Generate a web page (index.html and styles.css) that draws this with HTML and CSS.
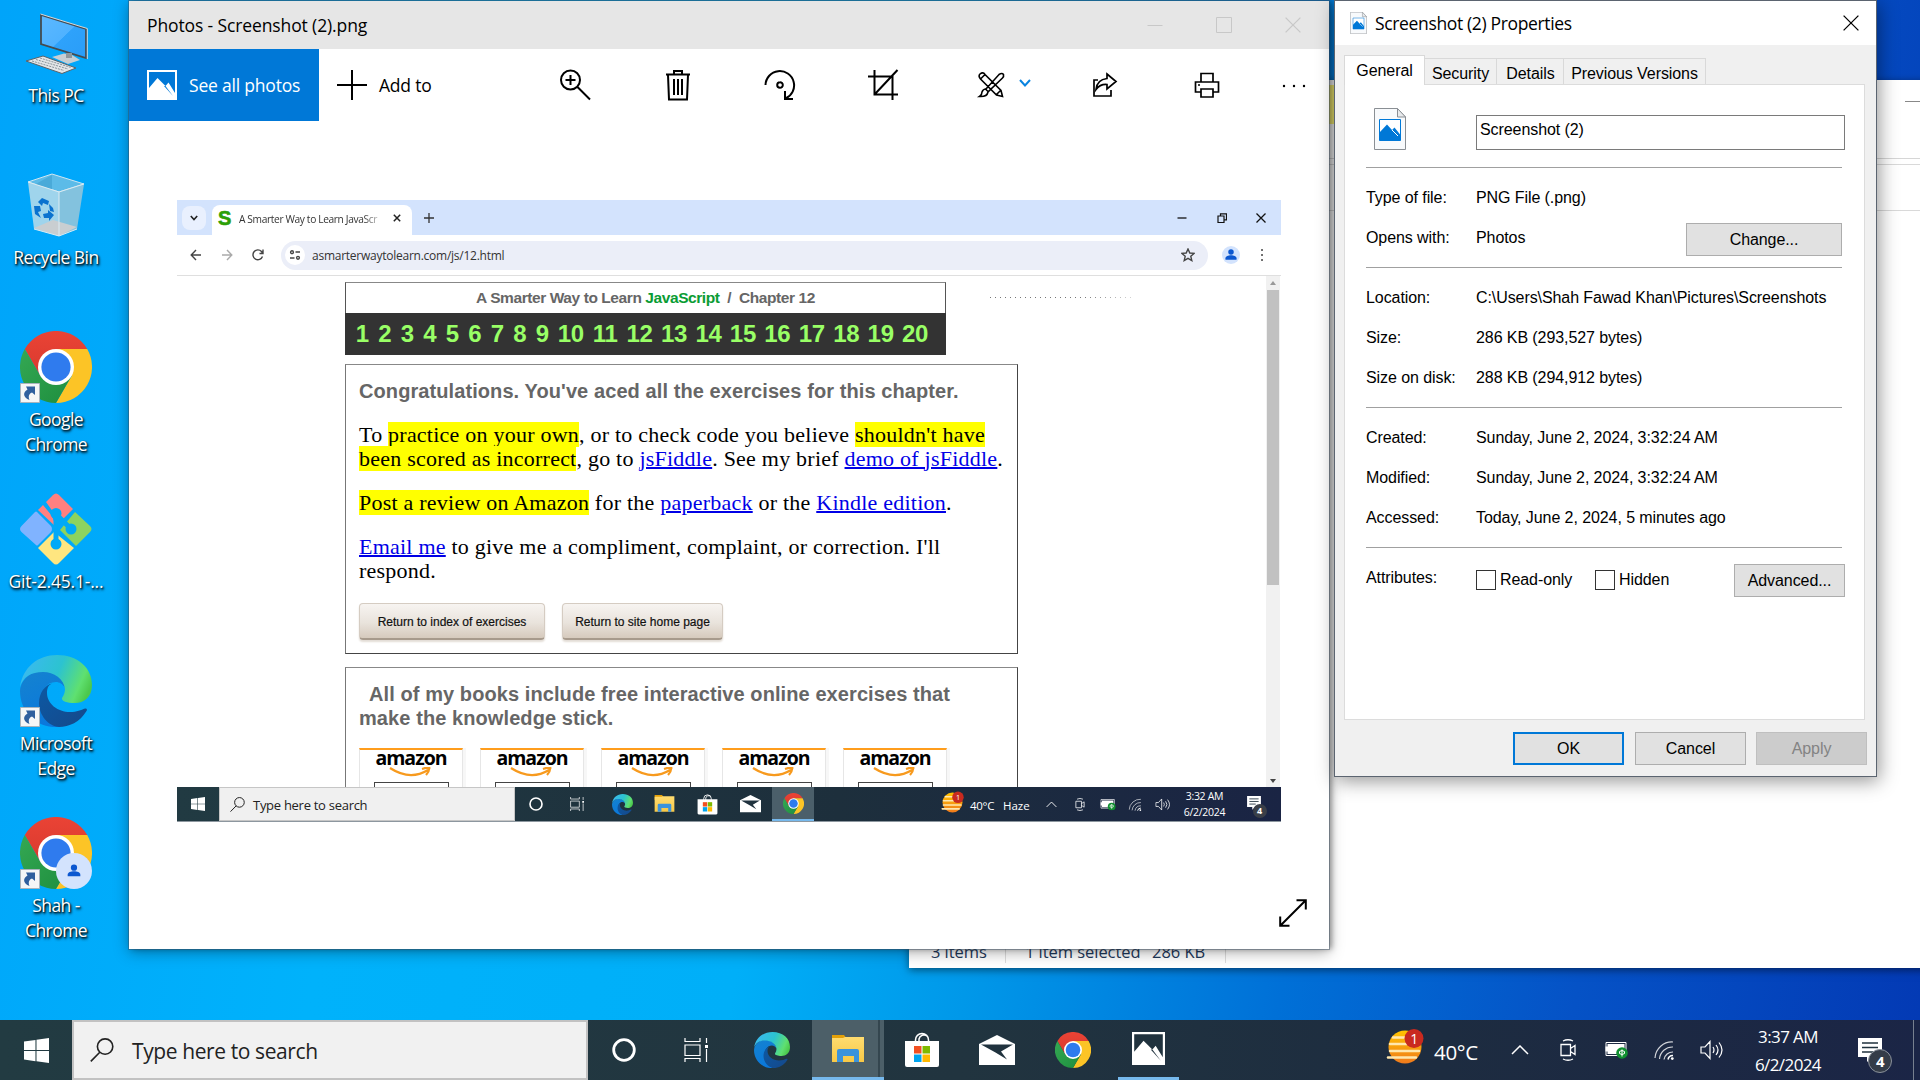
FILE: index.html
```html
<!DOCTYPE html>
<html lang="en">
<head>
<meta charset="utf-8">
<title>Desktop</title>
<link rel="stylesheet" href="styles.css">
</head>
<body>
<svg class="defs" width="0" height="0" aria-hidden="true">
  <defs>
    <linearGradient id="g-swoosh" x1="0" y1=".3" x2="1" y2=".6"><stop offset="0" stop-color="#3bb9f0"/><stop offset=".5" stop-color="#2cc3d0"/><stop offset=".85" stop-color="#5fe070"/><stop offset="1" stop-color="#4cc84c"/></linearGradient>
    <linearGradient id="g-wave" x1="0" y1="0" x2=".4" y2="1"><stop offset="0" stop-color="#1583cf"/><stop offset="1" stop-color="#0a78dc"/></linearGradient>
    <linearGradient id="g-deep" x1="0" y1="0" x2="1" y2="1"><stop offset="0" stop-color="#0c59a4"/><stop offset="1" stop-color="#15488a"/></linearGradient>
    <linearGradient id="g-screen" x1="0" y1="0" x2="1" y2="1"><stop offset="0" stop-color="#5cb8ff"/><stop offset=".5" stop-color="#4fb2ff"/><stop offset=".51" stop-color="#2ea2fb"/><stop offset="1" stop-color="#2a9df8"/></linearGradient>
    <linearGradient id="g-sun" x1="0" y1="0" x2="0" y2="1"><stop offset="0" stop-color="#ffc400"/><stop offset="1" stop-color="#f07a1c"/></linearGradient>
    <linearGradient id="g-folder" x1="0" y1="0" x2="0" y2="1"><stop offset="0" stop-color="#ffdc70"/><stop offset="1" stop-color="#f8c846"/></linearGradient>
    <linearGradient id="g-red" x1="0" y1="0" x2="0" y2="1"><stop offset="0" stop-color="#ea4335"/><stop offset="1" stop-color="#d93a2f"/></linearGradient>
    <linearGradient id="g-green" x1="0" y1="0" x2="1" y2="1"><stop offset="0" stop-color="#34a853"/><stop offset="1" stop-color="#1e8e3e"/></linearGradient>
  </defs>
  <symbol id="chrome" viewBox="0 0 72 72">
    <path fill="url(#g-red)" d="M4.8 18A36 36 0 0 1 67.2 18H36V36L20.4 45Z"/>
    <path fill="#fcc426" d="M67.2 18A36 36 0 0 1 36 72L51.6 45 36 36V18Z"/>
    <path fill="url(#g-green)" d="M36 72A36 36 0 0 1 4.8 18L20.4 45 36 36 51.6 45Z"/>
    <circle cx="36" cy="36" r="18" fill="#fff"/><circle cx="36" cy="36" r="14.6" fill="#2f7bee"/>
  </symbol>
  <symbol id="edge" viewBox="0 0 72 72">
    <path fill="url(#g-wave)" d="M0 36C1 24 11 16 23 16C34 16 44 23 45 33C43 29 39 27 36 27C26 27 21 36 21 48C21 58 30 70 40 72C18 74 0 58 0 36Z"/>
    <path fill="url(#g-swoosh)" d="M0 32C3 12 18 0 37 0C58 0 72 13 72 30C72 42 64 48 55 48C47 48 41 46 42 43C44 40 45 37 45 34C44 24 34 17 23 17C11 17 3 22 0 32Z"/>
    <path fill="url(#g-deep)" d="M32 28.500C28 30 27 34 27 38C27 49 38 57 50 57C57 57 61 55 65 53.500C67 53 67.500 55 66.500 56C60 67 49 72 39 72C28 71 19 60 19 48C19 38 25 30 32 28.500Z"/>
  </symbol>
  <symbol id="shortcut" viewBox="0 0 20 20">
    <path fill="#f5f6f7" stroke="#a9b4bc" d="M.5 .5h19v19H.5z"/>
    <path fill="#2f5f9e" d="M6 3.500h9v8.500l-3-2.500c-3 1-4 4-2.500 7.500C3 14.500 2.500 9.500 7.500 6.500Z"/>
  </symbol>
  <symbol id="windows" viewBox="0 0 24 24"><path fill="#fff" d="M0 3.300 11 1.800V11.500H0ZM12 1.600 24 0V11.500H12ZM0 12.500H11V22.200L0 20.700ZM12 12.500H24V24L12 22.400Z"/></symbol>
  <symbol id="search" viewBox="0 0 24 24"><path fill="none" stroke="currentColor" stroke-width="1.600" d="M22.800 8.600a7.700 7.700 0 1 1-15.400 0a7.700 7.700 0 1 1 15.400 0M9.800 14.200.8 23.400"/></symbol>
  <symbol id="cortana" viewBox="0 0 24 24"><circle cx="12" cy="12" r="10.300" fill="none" stroke="#fff" stroke-width="2.800"/></symbol>
  <symbol id="taskview" viewBox="0 0 24 24"><path fill="none" stroke="#fff" stroke-width="1.200" d="M1 0v3.500h15V0M1 7h15v10.500H1zM1 24v-3.500h15V24M22.500 0v5M22.500 11v13"/><path fill="#fff" d="M21 7h3v3h-3z"/></symbol>
  <symbol id="folder" viewBox="0 0 34 28">
    <path fill="#e3a008" d="M1 0h12l3 4v4H1z"/><path fill="url(#g-folder)" d="M1 3h11l2-1h19v25H1z"/>
    <path fill="#3b93dc" d="M6 27V16q0-2 2-2h18q2 0 2 2v11h-5v-6H12v6z"/>
  </symbol>
  <symbol id="store" viewBox="0 0 36 36">
    <path fill="none" stroke="#fff" stroke-width="1.500" d="M11.500 10V8a6.500 6.500 0 0 1 13 0v2M15 10V7a5 5 0 0 1 8-3"/><path fill="#fff" d="M1 9h34v24q0 2-2 2H3q-2 0-2-2z"/>
    <path fill="#f25022" d="M10 14h7.500v7.500H10z"/><path fill="#7fba00" d="M18.500 14H26v7.500h-7.500z"/><path fill="#00a4ef" d="M10 22.500h7.500V30H10z"/><path fill="#ffb900" d="M18.500 22.500H26V30h-7.500z"/>
  </symbol>
  <symbol id="mail" viewBox="0 0 36 30"><path fill="#fff" d="M0 9 18 0 36 9V30H0Z"/><path fill="#20323e" d="M2 9.500H34L22 16.500 28 24.500 16.500 17.500Z"/></symbol>
  <symbol id="photo" viewBox="0 0 30 30"><path fill="#fff" d="M0 0h30v30H0z"/><path fill="currentColor" d="M2 2h26v21L21.500 12.500 18.500 16 10.500 8 2 18z"/><path fill="currentColor" d="M18.500 16 26 26 17 16z"/></symbol>
  <symbol id="weather" viewBox="0 0 38 38">
    <circle cx="19" cy="19" r="16.500" fill="url(#g-sun)"/>
    <path stroke="#ffe7ae" stroke-width="2.600" stroke-linecap="round" d="M7 9.500h16M4 16h18M4 23h29M2 29.500h28"/>
    <circle cx="28" cy="10.500" r="9.500" fill="#c92a1f"/>
  </symbol>
  <symbol id="caret" viewBox="0 0 18 10"><path fill="none" stroke="currentColor" stroke-width="1.500" d="M1 9 9 1 17 9"/></symbol>
  <symbol id="meet" viewBox="0 0 18 22"><path fill="none" stroke="#fff" stroke-width="1.300" d="M2 5.500h9.500v11H2zM11.500 9.500l4.500-3v9l-4.500-3M4 2q5-2.500 10 0M4 20q5 2.500 10 0"/></symbol>
  <symbol id="battery" viewBox="0 0 24 18"><path fill="#fff" d="M3 3h17v10H3zM1 5.500h2v5H1z"/><path fill="none" stroke="#fff" d="M1.500 1.500h20v13h-20z"/><circle cx="17.500" cy="12" r="5.800" fill="#109030"/><path fill="none" stroke="#fff" d="M17.500 8.500v7M15 10.500q2.500-2 5 0v2q-2.500 2-5 0z"/></symbol>
  <symbol id="wifi" viewBox="0 0 20 20"><path fill="none" stroke="#fff" stroke-width="1.200" opacity=".8" d="M1 18A17 17 0 0 1 19 2M5.500 19A13 13 0 0 1 19 7M10 19.500A9 9 0 0 1 19 12"/><path fill="none" stroke="#fff" stroke-width="1.500" d="M14 19.500A5 5 0 0 1 19 15.500"/><circle cx="18.300" cy="18.600" r="1.400" fill="#fff"/></symbol>
  <symbol id="speaker" viewBox="0 0 24 20"><path fill="none" stroke="#fff" stroke-width="1.200" d="M1 7h4l5-5.500v17L5 13H1zM13 7q2 3 0 6M16 5q4 5 0 10M19 2.500q6 7.500 0 15"/></symbol>
  <symbol id="note" viewBox="0 0 24 26"><path fill="#fff" d="M0 0h24v19H14l-5 5v-5H0z"/><path stroke="#20323e" stroke-width="1.500" d="M4 5h16M4 9.500h16M4 14h11"/></symbol>
  <symbol id="person" viewBox="0 0 24 24"><circle cx="12" cy="7" r="4.700" fill="#0b57d0"/><path fill="#0b57d0" d="M2.500 20v-2.500c0-3.300 5-5 9.500-5s9.500 1.700 9.500 5V20z"/></symbol>
  <symbol id="close" viewBox="0 0 16 16"><path fill="none" stroke="currentColor" stroke-width="1.300" d="M.6.600 15.400 15.400M15.400.600.600 15.400"/></symbol>
  <symbol id="file" viewBox="0 0 32 42"><path fill="#f8fafc" stroke="#8a8f94" d="M.5.500H23.500L31.500 9V41.500H.5z"/><path fill="#e8eaec" stroke="#8a8f94" d="M23.500.500V9h8z"/><path fill="#fff" stroke="#0078d7" d="M5.500 11.500h21v21h-21z"/><path fill="#0078d7" d="M5.500 24.500 13 16.500 18 22 20.500 19.500 26.500 27V32.500h-21z"/><path stroke="#fff" d="m18 22 6 6"/></symbol>
</svg>

<main class="desktop">
  <nav class="shortcuts">
    <div class="shortcut"><svg class="pc" viewBox="0 0 72 72">
      <path fill="url(#g-screen)" stroke="#454b50" stroke-width="1.800" d="M21 8 66 22V51L21 37Z"/><path fill="none" stroke="#d4dadd" d="M20.500 7 67.300 21.500V52"/>
      <path fill="#c7ced3" d="M32 50 44 46.500 52 48 60 53 48 57Z"/><path fill="#8d979d" d="M46 46h6v5h-6z"/>
      <path fill="#e3e6e8" stroke="#59636a" d="M6 54 23 49 56 61 42 66.500Z"/><path stroke="#89939a" stroke-dasharray="2 1" d="M12 54 44 63.500M16 52.500 48 62M20 51 51 60.500"/></svg><span>This PC</span></div>
    <div class="shortcut"><svg viewBox="0 0 72 72">
      <path fill="#5cbbe8" stroke="#cfe6f2" d="M8 13 32 5 64 15 39 23Z"/><path fill="#3e9fcf" d="M32 6v16l-18-6z" opacity=".6"/>
      <path fill="#9fd4ec" d="M8 13 39 23V67L14 60Z"/><path fill="#83c2de" d="M64 15 39 23V67L57 60Z"/>
      <path fill="#c9ced1" d="M14 59 33 51 57 58 39 67Z"/><path fill="none" stroke="#dcebf2" d="M8 13 39 23 64 15M39 23V67M14 60 39 67 57 60"/>
      <g fill="#0a72cf"><path d="m18 33 4-4 7 3-1 4-5-2-1 3z"/><path d="m14 37 6 0 1 5-3 1 3 6-6-4z"/><path d="m23 45 5-1v-3l6 5-5 6v-3l-5 0zM29 35l4 4 1 4-4-1z"/></g></svg><span>Recycle Bin</span></div>
    <div class="shortcut"><svg viewBox="0 0 72 72"><use href="#chrome"/><use href="#shortcut" y="52" width="20" height="20"/></svg><span>Google<br>Chrome</span></div>
    <div class="shortcut"><svg viewBox="0 0 72 72">
      <path fill="#80b3ff" d="M1.500 33 15 19q1-1 2 0L31 33q2 3 0 6L18 52q-1 1-2 0L1.500 39q-3-3 0-6z"/>
      <path fill="#ff8080" d="m26 9 7-7q3-3 6 0l14 14-12 12-3-3-7-9zM18 17l5-5 9 11 4 11z"/>
      <path fill="#8dd35f" d="m55 19 15 14q3 3 0 6L56 53 40 37z"/>
      <path fill="#ffe680" d="m18 55 16-16 20 16-15 15q-3 3-6 0z"/>
      <path fill="none" stroke="#00a9f7" stroke-width="5" d="M36 20v31M36 21l15 15"/><g fill="#00a9f7"><circle cx="36" cy="20.500" r="5.500"/><circle cx="51" cy="36" r="5.500"/><circle cx="36" cy="51" r="5.500"/></g></svg><span class="git">Git-2.45.1-...</span></div>
    <div class="shortcut"><svg viewBox="0 0 72 72"><use href="#edge"/><use href="#shortcut" y="52" width="20" height="20"/></svg><span>Microsoft<br>Edge</span></div>
    <div class="shortcut"><svg viewBox="0 0 72 72"><use href="#chrome"/><circle cx="54" cy="54" r="18" fill="#d3e3fd"/><use href="#person" x="46" y="46" width="16" height="16"/><use href="#shortcut" y="52" width="20" height="20"/></svg><span>Shah -<br>Chrome</span></div>
  </nav>

  <section class="window explorer">
    <div class="ex-caption"></div>
    <div class="ex-ribbon"></div><div class="ex-tools"></div><div class="ex-path"></div>
    <div class="ex-status"><span class="items">3 items</span><span class="selected">1 item selected</span><span class="amount">286 KB</span></div>
  </section>

  <section class="window photos">
    <header class="ph-title"><span>Photos - Screenshot (2).png</span>
      <svg viewBox="0 0 16 16"><path stroke="currentColor" d="M.5 8.500h15"/></svg>
      <svg viewBox="0 0 16 16"><path fill="none" stroke="currentColor" d="M.5 .5h15v15H.5z"/></svg>
      <svg viewBox="0 0 16 16"><use href="#close"/></svg></header>
    <div class="ph-bar">
      <div class="see-all"><svg viewBox="0 0 30 30"><use href="#photo"/></svg><span>See all photos</span></div>
      <div class="add-to"><svg viewBox="0 0 30 30"><path stroke="#000" stroke-width="2" d="M15 0v30M0 15h30"/></svg><span>Add to</span></div>
      <div class="tools">
        <svg viewBox="0 0 32 32"><path d="M21 11a9.500 9.500 0 1 1-19 0a9.500 9.500 0 1 1 19 0M11.500 6v10M6.500 11h10M18.500 18 31 30.500"/></svg>
        <svg viewBox="0 0 32 32"><path d="M4 5.500h24M12 5.500V2h8v3.500M6 6l1 24.500h18L26 6M12 10v16M16 10v16M20 10v16"/></svg>
        <svg viewBox="0 0 32 32"><path d="M1.500 16A14.300 14.300 0 1 1 21.500 29.500M21 22v8h8M16 13.200a2.800 2.800 0 1 1 0 5.600a2.800 2.800 0 1 1 0-5.600"/></svg>
        <svg viewBox="0 0 32 32"><path d="M1 7.500h24.500V31M7.500 1v24.500H31M30.500 1 7.500 25.500"/></svg>
        <svg viewBox="0 0 32 32"><path stroke-width="1.600" d="M5 5q3-2.500 5 .5l16 16 1.500 6-6-1.500L5.500 10Q3 7 5 5zM27.500 9 13 23q-1 5-8.500 4.500 2.500-1.500 2.500-4.500 1-3 4-3L24 5.500q3-2 4.500 0 .5 2-1 3.500zM10 19.500l3.500 3.500M21.500 25.500l4.500-4.500M6 9.500l4-4"/></svg>
        <svg class="chev" viewBox="0 0 12 8"><path d="M1 1 6 6.500 11 1"/></svg>
        <svg viewBox="0 0 32 32"><path stroke-width="1.700" d="M9 11H5v16h17v-6M18 5l9 7.500-9 7.500v-4.500q-7-.5-11 5 1-10 11-11z"/></svg>
        <svg viewBox="0 0 32 32"><path stroke-width="1.700" d="M10 13V4.500h12V13M10 23H4.500V13h23v10H22M10 20h12v8H10zM7 16h2"/></svg>
        <svg viewBox="0 0 32 32"><path stroke-width="2.400" stroke-linecap="round" d="M6 17h.01M16 17h.01M26 17h.01"/></svg>
      </div>
    </div>

    <div class="picture">
      <div class="tabstrip">
        <div class="tab-menu"><svg viewBox="0 0 8 6"><path fill="none" stroke="#222" stroke-width="1.600" d="M.8 1 4 4.500 7.200 1"/></svg></div>
        <div class="tab"><b>S</b><span>A Smarter Way to Learn JavaScr</span><svg viewBox="0 0 8 8"><path stroke="#222" stroke-width="1.500" d="m.8.800 6.400 6.400M7.200.800.800 7.200"/></svg></div>
        <svg class="plus" viewBox="0 0 10 10"><path stroke="#333" stroke-width="1.300" d="M5 0v10M0 5h10"/></svg>
        <div class="frame-btns"><svg viewBox="0 0 10 10"><path stroke="#111" stroke-width="1.300" d="M.5 5h9"/></svg><svg viewBox="0 0 10 10"><path fill="none" stroke="#111" stroke-width="1.200" d="M1 3h6v6.500H1zM3.500 3V.8h6v6H7"/></svg><svg viewBox="0 0 10 10"><path stroke="#111" stroke-width="1.300" d="m.5.500 9 9M9.500.500l-9 9"/></svg></div>
      </div>
      <div class="urlbar">
        <svg viewBox="0 0 12 12"><path d="M11 6H1.500M6 1 1.200 6 6 11"/></svg><svg class="off" viewBox="0 0 12 12"><path d="M1 6h9.500M6 1l4.800 5L6 11"/></svg><svg viewBox="0 0 12 12"><path d="M10.500 7.500A4.900 4.900 0 1 1 9.500 2.500L11 4.500M11 .5v4H7.500"/></svg>
        <div class="pill"><i><svg viewBox="0 0 12 10"><path d="M6.500 2H11M1 8h4.500"/><circle cx="3" cy="2.200" r="1.400"/><circle cx="9" cy="7.800" r="1.400"/></svg></i><span>asmarterwaytolearn.com/js/12.html</span><svg class="star" viewBox="0 0 14 14"><path d="m7 1 1.800 4 4.200.4-3.200 2.900 1 4.200L7 10.300l-3.800 2.200 1-4.200L1 5.400 5.200 5z"/></svg></div>
        <em><svg viewBox="0 0 24 24"><use href="#person"/></svg></em>
        <svg class="kebab" viewBox="0 0 4 14"><path d="M2 2h.01M2 7h.01M2 12h.01"/></svg>
      </div>
      <div class="page">
        <div class="content">
          <div class="chapter"><div class="chapter-name">A Smarter Way to Learn <b>JavaScript</b>&nbsp; /&nbsp; Chapter 12</div>
            <div class="numbers"><i>1</i><i>2</i><i>3</i><i>4</i><i>5</i><i>6</i><i>7</i><i>8</i><i>9</i><u>10</u><u>11</u><u>12</u><u>13</u><u>14</u><u>15</u><u>16</u><u>17</u><u>18</u><u>19</u><u>20</u></div></div>
          <div class="box done">
            <h2>Congratulations. You've aced all the exercises for this chapter.</h2>
            <p>To <mark>practice on your own</mark>, or to check code you believe <mark>shouldn't have</mark><br><mark>been scored as incorrect</mark>, go to <a>jsFiddle</a>. See my brief <a>demo of jsFiddle</a>.</p>
            <p><mark>Post a review on Amazon</mark> for the <a>paperback</a> or the <a>Kindle edition</a>.</p>
            <p><a>Email me</a> to give me a compliment, complaint, or correction. I'll<br>respond.</p>
            <div class="returns"><span class="to-index">Return to index of exercises</span><span class="to-home">Return to site home page</span></div>
          </div>
          <div class="box books">
            <h2><span class="indent">All of my books include free interactive online exercises that</span><br>make the knowledge stick.</h2>
            <div class="cards">
              <div class="card"><b>amazon</b><svg viewBox="0 0 46 11"><path d="M2 1q20 13 38 2M34 2q9-3 7 0 0 3-3 6"/></svg><i></i></div>
              <div class="card"><b>amazon</b><svg viewBox="0 0 46 11"><path d="M2 1q20 13 38 2M34 2q9-3 7 0 0 3-3 6"/></svg><i></i></div>
              <div class="card"><b>amazon</b><svg viewBox="0 0 46 11"><path d="M2 1q20 13 38 2M34 2q9-3 7 0 0 3-3 6"/></svg><i></i></div>
              <div class="card"><b>amazon</b><svg viewBox="0 0 46 11"><path d="M2 1q20 13 38 2M34 2q9-3 7 0 0 3-3 6"/></svg><i></i></div>
              <div class="card"><b>amazon</b><svg viewBox="0 0 46 11"><path d="M2 1q20 13 38 2M34 2q9-3 7 0 0 3-3 6"/></svg><i></i></div>
            </div>
          </div>
        </div>
        <div class="dots"></div>
        <div class="scroll"><svg viewBox="0 0 6 4"><path fill="#999" d="M0 4 3 0 6 4z"/></svg><i></i><svg viewBox="0 0 6 4"><path fill="#444" d="M0 0 3 4 6 0z"/></svg></div>
      </div>
      <div class="minibar">
        <div class="m-start"><svg viewBox="0 0 24 24"><use href="#windows"/></svg></div>
        <div class="m-search"><svg viewBox="0 0 24 24"><use href="#search"/></svg><span>Type here to search</span></div>
        <div class="m-app s"><svg viewBox="0 0 24 24"><use href="#cortana"/></svg></div>
        <div class="m-app s"><svg viewBox="0 0 24 24"><use href="#taskview"/></svg></div>
        <div class="m-app first-app"><svg viewBox="0 0 72 72"><use href="#edge"/></svg></div>
        <div class="m-app"><svg viewBox="0 0 34 28"><use href="#folder"/></svg></div>
        <div class="m-app"><svg viewBox="0 0 36 36"><use href="#store"/></svg></div>
        <div class="m-app"><svg viewBox="0 0 36 30"><use href="#mail"/></svg></div>
        <div class="m-app on"><svg viewBox="0 0 72 72"><use href="#chrome"/></svg></div>
        <div class="m-tray">
          <svg class="w" viewBox="0 0 38 38"><use href="#weather"/><text x="28" y="15" font-size="12" fill="#fff" text-anchor="middle">1</text></svg><span class="m-temp">40°C</span><span class="m-haze">Haze</span>
          <svg class="c" viewBox="0 0 18 10"><use href="#caret"/></svg><svg viewBox="0 0 18 22"><use href="#meet"/></svg><svg viewBox="0 0 24 18"><use href="#battery"/></svg><svg viewBox="0 0 20 20"><use href="#wifi"/></svg><svg viewBox="0 0 24 20"><use href="#speaker"/></svg>
          <div class="m-clock">3:32 AM<br>6/2/2024</div>
          <div class="m-note"><svg viewBox="0 0 24 26"><use href="#note"/></svg><b>4</b></div>
        </div>
      </div>
    </div>
    <svg class="expand" viewBox="0 0 28 28"><path fill="none" stroke="#000" stroke-width="2" d="M1.500 26.500 26.500 1.500M17.500 1.200h9.300v9.300M1.200 17.500v9.300h9.300"/></svg>
  </section>

  <section class="window props">
    <header><svg class="p-icon" viewBox="0 0 32 42"><use href="#file"/></svg><span>Screenshot (2) Properties</span><svg class="p-close" viewBox="0 0 16 16"><use href="#close"/></svg></header>
    <div class="tabs"><span class="active">General</span><span class="t2">Security</span><span class="t3">Details</span><span class="t4">Previous Versions</span></div>
    <div class="panel">
      <div class="name"><svg viewBox="0 0 32 42"><use href="#file"/></svg><div class="field">Screenshot (2)</div></div>
      <div class="group"><div class="row"><span>Type of file:</span><span>PNG File (.png)</span></div><div class="row"><span>Opens with:</span><span>Photos</span><span class="btn change">Change...</span></div></div>
      <div class="group"><div class="row"><span>Location:</span><span>C:\Users\Shah Fawad Khan\Pictures\Screenshots</span></div><div class="row"><span>Size:</span><span>286 KB (293,527 bytes)</span></div><div class="row"><span>Size on disk:</span><span>288 KB (294,912 bytes)</span></div></div>
      <div class="group"><div class="row"><span>Created:</span><span>Sunday, June 2, 2024, 3:32:24 AM</span></div><div class="row"><span>Modified:</span><span>Sunday, June 2, 2024, 3:32:24 AM</span></div><div class="row"><span>Accessed:</span><span>Today, June 2, 2024, 5 minutes ago</span></div></div>
      <div class="group"><div class="row attrs"><span>Attributes:</span><label class="ro"><i></i>Read-only</label><label><i></i>Hidden</label><span class="btn adv">Advanced...</span></div></div>
    </div>
    <footer><span class="btn ok">OK</span><span class="btn">Cancel</span><span class="btn disabled">Apply</span></footer>
  </section>

  <footer class="taskbar">
    <div class="start"><svg viewBox="0 0 24 24"><use href="#windows"/></svg></div>
    <div class="find"><svg viewBox="0 0 24 24"><use href="#search"/></svg><span>Type here to search</span></div>
    <div class="app first"><svg class="i24" viewBox="0 0 24 24"><use href="#cortana"/></svg></div>
    <div class="app first"><svg class="i24" viewBox="0 0 24 24"><use href="#taskview"/></svg></div>
    <div class="app browser"><svg class="i36" viewBox="0 0 72 72"><use href="#edge"/></svg></div>
    <div class="app open"><svg class="i34" viewBox="0 0 34 28"><use href="#folder"/></svg></div>
    <div class="app"><svg class="i36" viewBox="0 0 36 36"><use href="#store"/></svg></div>
    <div class="app"><svg class="i36" viewBox="0 0 36 30"><use href="#mail"/></svg></div>
    <div class="app"><svg class="i36" viewBox="0 0 72 72"><use href="#chrome"/></svg></div>
    <div class="app running"><svg class="i33" viewBox="0 0 30 30"><use href="#photo"/></svg></div>
    <div class="tray">
      <svg class="sun" viewBox="0 0 38 38"><use href="#weather"/><text x="28" y="15.500" font-size="14" fill="#fff" text-anchor="middle">1</text></svg>
      <span class="temp">40°C</span>
      <div class="cell"><svg width="18" height="10"><use href="#caret"/></svg></div>
      <div class="cell"><svg width="18" height="22"><use href="#meet"/></svg></div>
      <div class="cell"><svg width="25" height="18"><use href="#battery"/></svg></div>
      <div class="cell"><svg width="20" height="20"><use href="#wifi"/></svg></div>
      <div class="cell"><svg width="24" height="20"><use href="#speaker"/></svg></div>
      <div class="clock">3:37 AM<br>6/2/2024</div>
      <div class="notes"><svg viewBox="0 0 24 26"><use href="#note"/></svg><b>4</b></div>
    </div>
  </footer>
</main>
</body>
</html>
```
FILE: styles.css
```css
* { box-sizing: border-box; }
body { margin: 0; overflow: hidden; font-family: "Open Sans", "Noto Sans", sans-serif; color: #000; }
svg { display: block; flex: none; }
i, em { font-style: normal; }
u { text-decoration: none; }
.defs { position: absolute; }
.desktop {
  position: relative; width: 1920px; height: 1080px; overflow: hidden;
  background: linear-gradient(100deg, #00a4fa 0, #00b2fb 23%, #00aff8 43%, #0098e9 54%, #0070d7 69%, #0552c6 83%, #0339b4 100%);
}
.window { position: absolute; }

/* desktop shortcuts */
.shortcuts { width: 112px; padding-top: 7px; display: flex; flex-direction: column; }
.shortcut { height: 162px; display: flex; flex-direction: column; align-items: center; text-align: center; color: #fff; font-size: 17.5px; line-height: 25px; letter-spacing: -.55px; white-space: nowrap; text-shadow: 1px 1px 2px #000, 1px 2px 3px rgba(0,0,0,.8); }
.shortcut svg { width: 72px; height: 72px; margin-bottom: 4px; }
.shortcut .git { letter-spacing: -.2px; }

/* explorer behind */
.explorer { left: 909px; top: 80px; width: 1020px; height: 888px; background: #fff; box-shadow: 0 2px 8px rgba(0,0,0,.5); display: flex; flex-direction: column; }
.ex-caption { width: 15px; height: 1px; margin: 21px 9px -22px auto; background: #888; }
.ex-ribbon { margin-top: 5px; height: 39px; width: 426px; background: #fbf377; }
.ex-tools { height: 35px; border-bottom: 1px solid #d6d6d6; }
.ex-path { height: 47px; margin-top: 5px; border: solid #d9d9d9; border-width: 1px 0; }
.ex-status { margin-top: auto; height: 34px; padding-left: 22px; display: flex; align-items: center; font-size: 16.5px; color: #1e395b; letter-spacing: -.05px; white-space: nowrap; }
.items { width: 75px; border-right: 1px solid #ddd; }
.selected { padding-left: 19px; width: 146px; }
.amount { width: 74px; border-right: 1px solid #ddd; }

/* photos window */
.photos { left: 129px; top: 1px; width: 1200px; height: 948px; background: #fff; box-shadow: 0 0 0 1px rgba(60,80,100,.45), 3px 0 5px rgba(0,0,0,.3), 0 3px 14px rgba(0,0,0,.35); }
.ph-title { height: 48px; background: #e6e6e6; display: flex; align-items: center; padding: 0 28px 0 18px; gap: 53px; color: #c8c8c8; }
.ph-title span { flex: 1; color: #000; font-size: 17.5px; letter-spacing: -.12px; }
.ph-title svg { width: 16px; }
.ph-bar { height: 72px; display: flex; align-items: center; font-size: 17.5px; letter-spacing: -.2px; }
.see-all { flex: none; width: 190px; height: 72px; background: #0078d7; color: #fff; display: flex; align-items: center; padding-left: 18px; gap: 12px; white-space: nowrap; }
.see-all svg { width: 30px; color: #0078d7; }
.add-to { flex: none; width: 240px; display: flex; align-items: center; padding-left: 18px; gap: 12px; }
.see-all span, .add-to span { padding-bottom: 1px; }
.add-to svg { width: 30px; }
.tools { flex: none; display: flex; align-items: center; }
.tools svg { width: 32px; height: 32px; margin-right: 70.500px; fill: none; stroke: #000; stroke-width: 2; }
.tools svg:nth-child(4) { margin-right: 76px; }
.tools svg:nth-child(5) { margin-right: 10px; }
.tools svg.chev { width: 12px; height: 8px; margin: -5px 58px 0 2px; stroke: #0a84e0; }
.tools svg:nth-child(8) { margin-right: 54.500px; }
.tools svg:last-child { margin-right: 0; }
.expand { position: absolute; left: 1150px; top: 898px; width: 28px; height: 28px; }

/* picture being viewed */
.picture { width: 1104px; height: 622px; margin: 79px 0 0 48px; background: #fff; display: flex; flex-direction: column; }
.tabstrip { height: 35px; background: #d3e3fd; display: flex; align-items: center; padding-left: 5px; }
.tab-menu { width: 24px; height: 24px; border-radius: 8px; background: #e9f0fe; display: flex; align-items: center; justify-content: center; }
.tab-menu svg { width: 8px; }
.tab { width: 200px; height: 30px; margin: 5px 0 0 6px; padding-left: 6px; background: #fff; border-radius: 8px 8px 0 0; display: flex; align-items: center; }
.tab b { font: bold 20px "Liberation Sans", sans-serif; color: #2c9f06; width: 21px; -webkit-text-stroke: .6px #2c9f06; padding-bottom: 3px; }
.tab span { width: 144px; margin-top: -3px; white-space: nowrap; font-size: 10.2px; letter-spacing: -.36px; color: #333; -webkit-mask-image: linear-gradient(90deg, #000 86%, transparent 102%); mask-image: linear-gradient(90deg, #000 86%, transparent 102%); }
.tab svg { width: 8px; margin: -4px 0 0 10px; }
.plus { width: 10px; margin-left: 12px; }
.frame-btns { margin-left: auto; display: flex; gap: 29.500px; padding-right: 15px; }
.frame-btns svg { width: 10px; }
.urlbar { height: 41px; border-bottom: 1px solid #dfdfdf; display: flex; align-items: center; padding-left: 13px; background: #fff; }
.urlbar svg { fill: none; stroke: #444; stroke-width: 1.400; }
.urlbar > svg { width: 12px; margin-right: 19px; }
.urlbar > svg.off { stroke: #aaa; }
.urlbar > svg:nth-of-type(3) { margin-right: 17px; }
.pill { width: 927px; height: 29px; border-radius: 15px; background: #ebeef8; display: flex; align-items: center; padding: 0 13px 0 4px; font-size: 12px; letter-spacing: -.25px; color: #333; }
.pill i { width: 20px; height: 20px; margin-right: 7px; border-radius: 50%; background: #fff; display: flex; align-items: center; justify-content: center; }
.pill i svg { width: 12px; }
.pill .star { width: 14px; margin-left: auto; }
.urlbar em { margin-left: 14px; width: 18px; height: 18px; border-radius: 50%; background: #d3e3fd; display: flex; align-items: center; justify-content: center; }
.urlbar em svg { width: 14px; stroke: none; }
.urlbar > svg.kebab { width: 4px; margin: 0 0 0 20px; stroke-width: 2; stroke-linecap: round; }
.page { height: 511px; display: flex; overflow: hidden; }
.content { width: 673px; margin-left: 168px; padding-top: 6px; }
.chapter { width: 601px; height: 73px; border: 1px solid #555; border-top-color: #888; }
.chapter-name { height: 30px; font: bold 15.5px/29px "Liberation Sans", sans-serif; color: #666; text-align: center; letter-spacing: -.42px; }
.chapter-name b { color: #0a9c34; }
.numbers { height: 42px; margin: 0 -1px; padding-left: 6px; background: #333; display: flex; font: bold 24px/42px "Liberation Sans", sans-serif; color: #9f6; letter-spacing: -.3px; text-align: center; }
.numbers i { width: 22.500px; }
.numbers u { width: 34.450px; }
.box { width: 673px; border: 1px solid #444; border-top-color: #888; border-left-color: #777; padding-left: 13px; white-space: nowrap; }
.done { height: 290px; margin-top: 9px; padding-top: 15px; }
.box h2 { margin: 0; font: bold 20px/23.500px "Liberation Sans", sans-serif; color: #666; letter-spacing: .085px; }
.box p { margin: 20px 0; font: 22px/24px "Liberation Serif", serif; letter-spacing: .23px; }
.box h2 + p { margin-top: 19px; }
.box mark { background: #ff0; }
.box a { color: #0000e6; text-decoration: underline; text-decoration-thickness: 1.500px; }
.returns { display: flex; gap: 17px; font: 12px/37px "Liberation Sans", sans-serif; color: #111; text-align: center; -webkit-text-stroke: .2px #111; }
.returns span { height: 37px; border-radius: 4px; background: linear-gradient(#f7f4f1, #e9e3dc 55%, #d6cabd); border: 1px solid #d5ccc2; border-bottom: 2px solid #a79a8c; box-shadow: 0 2px 2px #e3ddd6; }
.to-index { width: 186px; }
.to-home { width: 161px; }
.books { height: 140px; margin-top: 13px; padding-top: 15px; }
.indent { padding-left: 10px; }
.cards { display: flex; gap: 17px; padding: 18px 0 0 0; }
.card { width: 104px; height: 60px; border: 1px solid #e6e6e6; border-top: 2px solid #ff9d1c; box-shadow: 3px 0 0 #f7f7f7; display: flex; flex-direction: column; align-items: center; }
.card b { font: bold 19.5px/20px "Open Sans", sans-serif; letter-spacing: -1px; margin-top: -2px; }
.card svg { width: 46px; margin-top: -1px; fill: none; stroke: #f79a1e; stroke-width: 2.300; }
.card i { width: 75px; height: 30px; margin-top: 4px; border: 1px solid #444; }
.dots { width: 143px; height: 1px; margin: 21px auto 0 -28px; background: repeating-linear-gradient(90deg, #777 0 1px, transparent 1px 5px); -webkit-mask-image: linear-gradient(90deg, #000 65%, rgba(0,0,0,.3)); mask-image: linear-gradient(90deg, #000 65%, rgba(0,0,0,.3)); }
.scroll { width: 14px; margin-right: 1px; background: #f1f1f1; display: flex; flex-direction: column; align-items: center; padding: 5px 0 4px; }
.scroll svg { width: 6px; }
.scroll i { width: 12px; height: 295px; margin: 5px 0 auto; background: #c1c1c1; }

/* taskbar inside the picture */
.minibar { height: 35px; background: linear-gradient(90deg, #213a42, #1d2f3c 60%, #1a2444); display: flex; align-items: center; color: #fff; border-bottom: 1px solid #8d979f; }
.m-start { width: 42px; display: flex; justify-content: center; }
.m-start svg { width: 14px; }
.m-search { width: 296px; height: 34px; background: #f0f0f0; border: 1px solid #c6c6c6; color: #222; display: flex; align-items: center; padding: 1px 0 0 10px; gap: 8px; font-size: 13px; letter-spacing: -.28px; }
.m-search svg { width: 15px; }
.m-app { width: 43px; height: 34px; display: flex; align-items: center; justify-content: center; }
.m-app svg { width: 21px; }
.m-app.s { width: 41.500px; }
.m-app.s svg { width: 14px; }
.m-app.first-app { width: 45px; padding-left: 3px; }
.m-app.on { background: #4b5f6a; border-bottom: 2px solid #76b9ed; width: 42px; }
.m-tray { margin-left: auto; display: flex; align-items: center; font-size: 11.5px; letter-spacing: -.3px; white-space: nowrap; }
.m-tray svg { height: 13px; width: 16px; margin-right: 11.500px; }
.m-tray svg.w { width: 23px; height: 23px; margin: -3px 6px 0 0; }
.m-tray svg.c { width: 11px; height: 7px; margin: 0 15px 0 0; }
.m-temp { width: 33px; padding-top: 2px; }
.m-haze { width: 43px; letter-spacing: 0; padding-top: 2px; }
.m-clock { width: 50px; margin-left: -2.500px; font-size: 10.500px; line-height: 16.500px; text-align: center; }
.m-note { position: relative; width: 51.500px; height: 34px; padding: 9px 0 0 17px; }
.m-tray .m-note svg { width: 14px; height: 15px; }
.m-note b { position: absolute; left: 23px; top: 17px; width: 14px; height: 14px; border-radius: 50%; background: #3a3f48; font-size: 9px; line-height: 14px; text-align: center; }

/* properties dialog */
.props { left: 1334px; top: 0; width: 543px; height: 777px; background: #f0f0f0; border: 1px solid #5b6470; box-shadow: 2px 4px 18px rgba(0,0,0,.42); font: 16px/20px "Liberation Sans", sans-serif; letter-spacing: -.08px; white-space: nowrap; }
.props header { height: 44px; background: #fff; display: flex; align-items: center; padding: 0 17px 0 15px; font: 17.500px/24px "Open Sans", sans-serif; letter-spacing: -.35px; }
.p-icon { width: 17px; height: 22px; margin-right: 8px; }
.p-close { width: 16px; margin: 0 0 0 auto; }
.tabs { height: 39px; padding-left: 9px; display: flex; align-items: flex-end; }
.tabs span { height: 26px; line-height: 29px; text-align: center; border: 1px solid #d9d9d9; border-width: 1px 1px 0 0; }
.tabs .active { position: relative; width: 81px; height: 30px; line-height: 30px; margin-bottom: -1px; background: #fff; border-left-width: 1px; }
.t2 { width: 72px; }
.t3 { width: 67px; padding-left: 1px; }
.t4 { width: 142px; }
.panel { width: 521px; height: 636px; margin-left: 9px; border: 1px solid #dcdcdc; background: #fff; padding: 0 22px 0 21px; }
.name { height: 82px; display: flex; align-items: center; padding-left: 8px; }
.name svg { width: 32px; margin-top: 6px; }
.field { flex: none; width: 369px; height: 35px; margin: 12px 0 0 70px; padding-left: 3px; line-height: 28px; border: 1px solid #7a7a7a; }
.group { width: 476px; border-top: 1px solid #a0a0a0; padding: 10px 0 9px; }
.row { height: 40px; display: flex; align-items: center; }
.row > span:first-child { width: 110px; }
.btn { height: 33px; line-height: 32px; width: 111px; flex: none; text-align: center; background: #e1e1e1; border: 1px solid #adadad; }
.change { width: 156px; margin: 2px 0 0 auto; }
.adv { margin: 4px -3px 0 auto; }
.row label { display: flex; align-items: center; gap: 4px; padding-top: 3px; }
.row label i { width: 20px; height: 20px; border: 1px solid #333; background: #fff; }
.row .ro { width: 119px; }
.props footer { display: flex; justify-content: flex-end; gap: 10px; padding: 12px 9px 0; }
.ok { border: 2px solid #0078d7; line-height: 30px; margin-right: 1px; }
.disabled { background: #ccc; border-color: #bfbfbf; color: #838383; }

/* main taskbar */
.taskbar { position: absolute; left: 0; top: 1020px; width: 1920px; height: 60px; background: linear-gradient(90deg, #223b42, #21343f 50%, #1d2c40 75%, #1b2546); display: flex; align-items: center; color: #fff; }
.start { flex: none; width: 72px; display: flex; justify-content: center; }
.start svg { width: 25px; }
.find { flex: none; width: 516px; height: 60px; background: #f1f1f1; border: 2px solid #c2c2c2; color: #222; display: flex; align-items: center; padding: 0 0 0 16px; gap: 18px; font-size: 21px; letter-spacing: -.4px; }
.find svg { width: 24px; }
.find span { padding-top: 2px; }
.app { flex: none; width: 75.500px; height: 60px; display: flex; align-items: center; justify-content: center; }
.first { width: 72px; }
.browser { width: 80px; }
.i24 { width: 24px; } .i36 { width: 36px; } .i34 { width: 34px; }
.i33 { width: 33px; color: #20323e; }
.open { width: 72px; background: linear-gradient(90deg, #4c5f68 0 66px, #34464f 66px 68px, #4c5f68 68px); border-bottom: 3px solid #76b9ed; }
.running { width: 61px; margin-left: 7px; border-bottom: 3px solid #76b9ed; }
.tray { margin-left: auto; height: 60px; display: flex; align-items: center; border-right: 1px solid #77808f; margin-right: 6px; letter-spacing: -.6px; white-space: nowrap; }
.sun { width: 38px; margin: -6px 10px 0 0; }
.temp { width: 62px; font-size: 20.5px; letter-spacing: -.3px; padding-top: 3px; }
.cell { width: 48px; display: flex; justify-content: center; }
.clock { width: 104px; padding-top: 1px; text-align: center; font-size: 17px; line-height: 28px; }
.notes { position: relative; width: 73px; height: 60px; padding: 18px 0 0 18px; }
.notes svg { width: 24px; }
.notes b { position: absolute; left: 28px; top: 29px; width: 24px; height: 24px; border-radius: 50%; border: 1px solid #8b929c; background: #343c48; font-size: 15px; line-height: 22px; text-align: center; }
```
